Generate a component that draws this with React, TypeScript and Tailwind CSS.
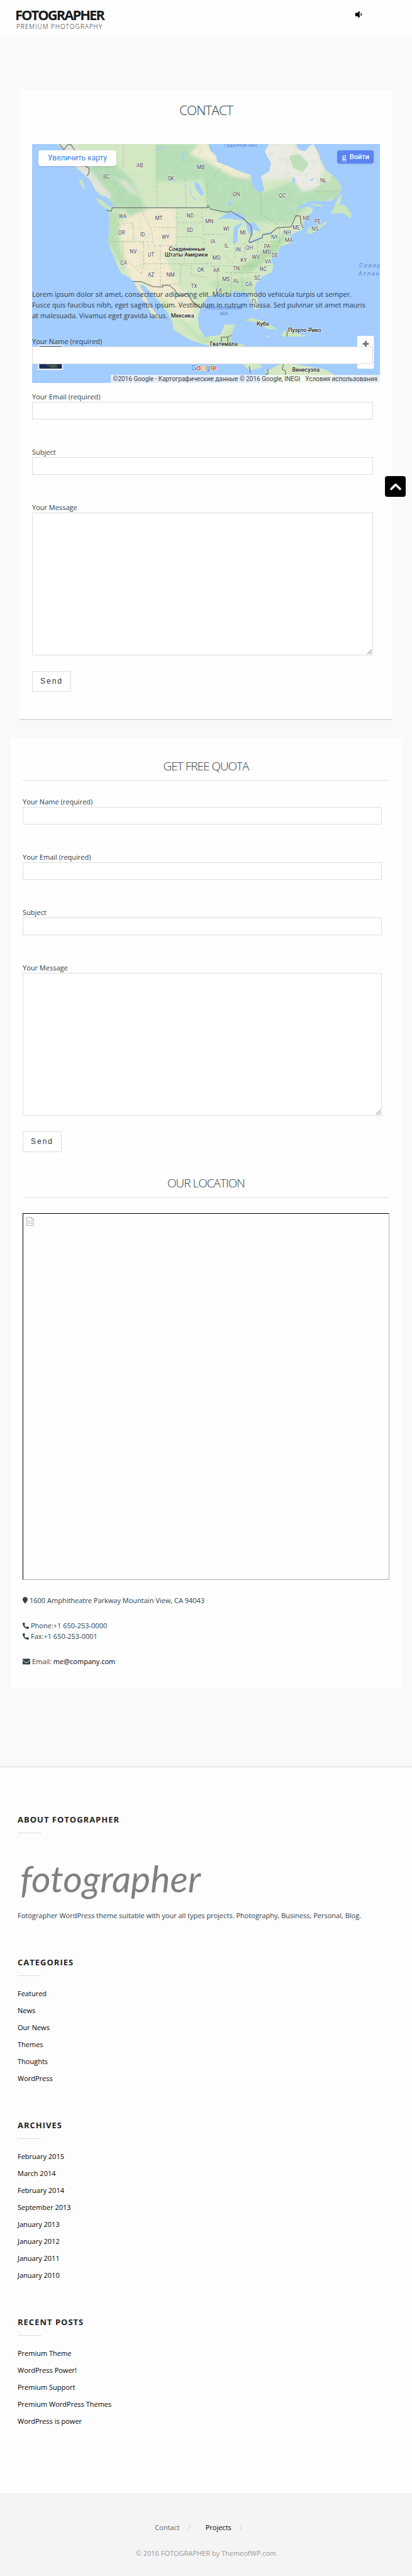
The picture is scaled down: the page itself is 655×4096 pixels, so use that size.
import React from "react";
import { ChevronUp } from "lucide-react";
import { FaEnvelope, FaMapMarker, FaPhone, FaVolumeDown } from "react-icons/fa";

type MapLabel = { x: number; y: number; text: string };

const states: MapLabel[] = [
    { x: 373, y: 175, text: "BC" }, { x: 541, y: 117, text: "AB" }, { x: 697, y: 184, text: "SK" },
    { x: 847, y: 127, text: "MB" }, { x: 1025, y: 261, text: "ON" }, { x: 1256, y: 267, text: "QC" },
    { x: 1462, y: 192, text: "NL" }, { x: 455, y: 372, text: "WA" }, { x: 636, y: 381, text: "MT" },
    { x: 794, y: 369, text: "ND" }, { x: 449, y: 456, text: "OR" }, { x: 554, y: 465, text: "ID" },
    { x: 670, y: 477, text: "WY" }, { x: 792, y: 441, text: "SD" }, { x: 508, y: 549, text: "NV" },
    { x: 597, y: 564, text: "UT" }, { x: 460, y: 606, text: "CA" }, { x: 597, y: 666, text: "AZ" },
    { x: 695, y: 666, text: "NM" }, { x: 847, y: 642, text: "OK" }, { x: 813, y: 723, text: "TX" },
    { x: 890, y: 399, text: "MN" }, { x: 974, y: 435, text: "WI" }, { x: 1058, y: 456, text: "MI" },
    { x: 908, y: 498, text: "IA" }, { x: 976, y: 522, text: "IL" }, { x: 1035, y: 540, text: "IN" },
    { x: 1091, y: 531, text: "OH" }, { x: 1180, y: 525, text: "PA" }, { x: 1217, y: 477, text: "NY" },
    { x: 1178, y: 552, text: "MD" }, { x: 1219, y: 567, text: "DE" }, { x: 1123, y: 579, text: "WV" },
    { x: 1062, y: 594, text: "KY" }, { x: 1184, y: 600, text: "VA" }, { x: 926, y: 582, text: "MO" },
    { x: 1025, y: 636, text: "TN" }, { x: 1160, y: 639, text: "NC" }, { x: 925, y: 645, text: "AR" },
    { x: 1131, y: 681, text: "SC" }, { x: 973, y: 687, text: "MS" }, { x: 1025, y: 699, text: "AL" },
    { x: 1088, y: 714, text: "GA" }, { x: 938, y: 744, text: "LA" }, { x: 1116, y: 798, text: "FL" },
    { x: 1281, y: 456, text: "NH" }, { x: 1289, y: 492, text: "MA" }, { x: 1327, y: 429, text: "ME" },
    { x: 1376, y: 381, text: "NB" }, { x: 1434, y: 399, text: "PE" }, { x: 1420, y: 435, text: "NS" },
];

const countries: MapLabel[] = [
    { x: 777, y: 536, text: "Соединенные" },
    { x: 774, y: 566, text: "Штаты Америки" },
    { x: 755, y: 872, text: "Мексика" },
    { x: 1158, y: 912, text: "Куба" },
    { x: 1368, y: 943, text: "Пуэрто-Рико" },
    { x: 962, y: 1014, text: "Гватемала" },
    { x: 1374, y: 1144, text: "Венесуэла" },
];

const seas: MapLabel[] = [
    { x: 1050, y: 12, text: "Гудзонов зал." },
    { x: 965, y: 829, text: "Мексиканский" },
    { x: 965, y: 859, text: "зал." },
];

const mainland =
    "M125 0L160 32L190 62L205 100L240 135L272 160L296 186L318 232L345 258L372 264L405 300L404 326L384 342L390 392L382 490L394 530L412 568L428 612L450 652L486 668L508 690L524 716L560 708L590 738L640 792L682 850L704 892L708 930L745 955L790 982L840 1000L880 1010L950 1022L1010 1062L1050 1100L1090 1136L1130 1128L1160 1118L1176 1150L1180 1200L1500 1200L1520 1160L1470 1130L1400 1120L1340 1108L1270 1098L1230 1112L1180 1140L1140 1104L1080 1094L1060 1060L1066 1008L1000 1000L998 972L1010 930L1022 908L966 906L945 958L900 964L868 970L838 922L832 872L846 822L852 806L884 768L924 752L985 760L1010 738L1052 742L1080 750L1100 792L1116 832L1138 826L1134 784L1116 730L1122 704L1152 668L1202 644L1210 616L1200 580L1236 540L1244 516L1300 496L1294 462L1330 440L1366 426L1358 402L1372 372L1404 344L1410 326L1390 314L1350 320L1320 340L1336 312L1400 286L1500 286L1540 258L1556 214L1540 190L1512 160L1476 132L1452 90L1440 50L1412 0L1390 12L1372 36L1340 30L1322 0L1190 0L1168 38L1200 98L1190 140L1150 160L1158 206L1166 232L1142 246L1106 210L1100 156L1050 140L980 110L928 90L924 60L892 30L886 0Z";

const NorthAmericaMap = () => (
    <svg viewBox="0 0 1746 1200" className="block w-full" role="img" aria-label="Map" fontFamily="Roboto, sans-serif">
        <defs>
            <clipPath id="land"><path d={mainland} /></clipPath>
            <filter id="soft" x="-10%" y="-10%" width="120%" height="120%"><feGaussianBlur stdDeviation="9" /></filter>
            <filter id="speckle" x="0" y="0" width="100%" height="100%">
                <feTurbulence type="fractalNoise" baseFrequency="0.03" numOctaves="4" seed="4" />
                <feColorMatrix values="0 0 0 0 0.56  0 0 0 0 0.8  0 0 0 0 0.58  0 5 0 0 -2.6" />
            </filter>
        </defs>
        <rect width="1746" height="1200" fill="#a3ccff" />
        <path d={mainland} fill="#d3e8c3" />
        <g clipPath="url(#land)">
            <g filter="url(#soft)">
                {/* forests */}
                <path d="M620 0L880 0L930 70L1100 160L1150 250L1300 190L1560 190L1540 270L1400 300L1290 400L1080 390L880 320L860 180L620 190Z" fill="#b7deb7" />
                <path d="M240 90L420 100L500 180L560 300L600 440L540 440L470 330L380 320L280 180Z" fill="#b4dcb4" />
                <path d="M385 340L440 340L430 490L455 560L490 640L450 620L380 490Z" fill="#b9dfb2" />
                <path d="M1100 640L1240 530L1290 440L1220 480L1130 560L1000 650Z" fill="#b2dba9" />
                <path d="M890 690L1100 670L1110 750L930 750Z" fill="#bfe1b4" />
                <path d="M640 750L690 830L850 1000L1060 1010L1030 900L950 980L830 960Z" fill="#c2e2b4" />
                {/* dry lands */}
                <path d="M440 390L520 350L620 320L720 330L730 500L660 560L740 700L700 800L620 760L560 700L500 690L460 600L450 500Z" fill="#f3ead0" />
                <path d="M700 720L780 740L820 860L780 900L690 830Z" fill="#f1ead0" />
                {/* tundra */}
                <path d="M1170 0L1420 0L1460 130L1440 220L1360 240L1300 170L1150 190Z" fill="#ecebe3" />
                <path d="M840 0L890 0L930 70L1100 150L1090 175L1000 160L880 90L790 50Z" fill="#f1ecd4" />
                <path d="M120 0L220 0L290 130L400 260L380 290L280 200L200 90Z" fill="#e2e4da" />
                <path d="M420 170L480 190L540 270L500 250Z" fill="#e0e3d8" />
            </g>
            <rect width="1746" height="1200" filter="url(#speckle)" opacity="0.35" />
            <path d="M1290 60L1340 50L1390 100L1360 140L1310 120ZM1500 160L1530 150L1560 220L1410 240L1430 215L1500 200Z" fill="#bfe0b9" />
        </g>
        {/* islands */}
        <g fill="#c9e5bd">
            <path d="M512 690L546 694L552 722L580 790L612 838L640 876L626 880L596 850L576 800L550 780L556 760L530 730Z" fill="#e9e8c6" />
            <path d="M315 270L350 282L398 322L390 334L350 312Z" />
            <path d="M232 182L252 180L266 228L254 220Z" />
            <path d="M1552 252L1536 270L1512 326L1494 350L1560 346L1600 376L1604 350L1580 318L1560 300L1544 312L1558 256Z" />
            <path d="M1376 446L1384 424L1410 416L1450 404L1480 386L1478 400L1440 426L1400 452Z" />
            <path d="M1394 300L1450 304L1456 314L1420 312Z" />
            <path d="M1066 886L1100 874L1150 884L1200 910L1234 930L1180 930L1150 900L1100 890Z" />
            <path d="M1260 940L1290 936L1370 962L1330 968L1250 966ZM1170 962L1196 966L1180 970ZM1358 960L1384 962L1362 970Z" />
            <path d="M1168 838L1182 860L1176 862Z" />
        </g>
        {/* lakes */}
        <g fill="#a3ccff">
            <path d="M932 378L985 346L1040 344L1072 372L1060 384L1000 376L960 374Z" />
            <path d="M1008 500L1012 420L1044 400L1060 396L1034 424L1030 494Z" />
            <path d="M1072 392L1120 396L1150 440L1110 430L1098 468L1084 440Z" />
            <path d="M1086 492L1120 478L1160 462L1150 474L1096 500ZM1160 450L1204 440L1196 452L1164 456Z" />
            <path d="M814 186L838 200L862 250L850 262L820 220ZM786 200L796 250L826 284L806 270ZM756 40L766 44L752 96Z" />
            <path d="M984 290L998 286L1002 306L988 310ZM640 20L668 14L624 38ZM720 178L700 186L716 190ZM368 290L400 302L402 318L376 300Z" />
            <path d="M580 500L588 512L584 518ZM1392 180L1416 172L1406 186ZM1310 160L1322 180L1316 200L1306 186Z" />
            <path d="M540 704L560 716L596 764L610 800L570 760L552 730Z" />
        </g>
        {/* state lines */}
        <g fill="none" stroke="#9fae98" strokeWidth="2" strokeDasharray="14 7">
            <path d="M458 0V120M628 0V318M770 180L774 318M880 316V200L980 90M1147 240V350L1240 410M1412 236L1540 240" />
            <path d="M384 490H610M430 404L508 396V490M556 350L600 430L610 510M610 418H728M728 320V510M610 510H728M728 395H858M728 466H850L870 500M850 320L860 450" />
            <path d="M457 490V570L550 650M560 490V601M644 510V718M560 601H876M745 601V704H650M550 650L560 601M745 610H798V655L876 668M764 510V601" />
            <path d="M860 454H970M870 600H900L930 640V740M890 612H1200M970 560L1010 600M1016 494V580M1066 494V560M1132 490V540H1200M1000 645V740M1050 645L1060 740M970 645H1140M1130 490H1230M1240 420V500M1290 430V500" />
        </g>
        {/* borders */}
        <g fill="none" stroke="#6d7470" strokeWidth="4">
            <path d="M136 0L160 28L178 4L194 2L214 30M266 110L286 122L286 146L276 160M374 332L396 338L404 320H880L884 310L896 326L940 336L978 342L998 338L1060 374L1098 410L1104 450L1088 488L1094 496L1156 470L1158 454L1196 450L1230 420L1300 416L1324 360L1346 362L1350 400L1362 424" />
            <path d="M506 690L546 690L608 716L656 718V709H688L716 732L736 764L780 752L812 800L846 824M950 996V970H982L1000 960M982 970L984 1000L1000 996M1280 938V966M1262 1104L1256 1130L1272 1140V1160M1090 1116L1096 1150M1180 1132L1186 1150L1170 1160" />
        </g>
        <g fontSize="26" fill="#3f4444" stroke="#fff" strokeWidth="5" strokeOpacity="0.75" strokeLinejoin="round" paintOrder="stroke" textAnchor="middle">
            {states.map((s) => (
                <text key={s.text} x={s.x} y={s.y}>{s.text}</text>
            ))}
        </g>
        <g fontSize="28" fontWeight="500" fill="#222" stroke="#fff" strokeWidth="5" strokeOpacity="0.75" strokeLinejoin="round" paintOrder="stroke" textAnchor="middle">
            {countries.map((c) => (
                <text key={c.text} x={c.x} y={c.y}>{c.text}</text>
            ))}
        </g>
        <g fontSize="27" fontStyle="italic" fill="#5a8ace" textAnchor="middle">
            {seas.map((s) => (
                <text key={s.text} x={s.x} y={s.y}>{s.text}</text>
            ))}
        </g>
        <g fontSize="30" fontStyle="italic" fill="#5a8ace" letterSpacing="6">
            <text x="1642" y="620">Северная</text>
            <text x="1638" y="659">Атлантика</text>
        </g>
        <text x="1466" y="1178" fontSize="24" fill="#a9a9a9">Гайана</text>
        {/* satellite switch and zoom box */}
        <rect x="30" y="1008" width="126" height="126" rx="6" fill="#fff" />
        <rect x="36" y="1014" width="114" height="114" fill="#1b2c5c" />
        <path d="M60 1100L90 1108L120 1100L128 1120L100 1126Z" fill="#46583f" />
        <rect x="1632" y="963" width="84" height="165" rx="6" fill="#fff" />
        <path d="M1660 1003H1690M1675 988V1018" stroke="#666" strokeWidth="8" />
        <g fontSize="40" fontWeight="500" stroke="#fff" strokeWidth="4" paintOrder="stroke">
            <text x="798" y="1138">
                <tspan fill="#4285f4">G</tspan>
                <tspan fill="#ea4335">o</tspan>
                <tspan fill="#fbbc05">o</tspan>
                <tspan fill="#4285f4">g</tspan>
                <tspan fill="#34a853">l</tspan>
                <tspan fill="#ea4335">e</tspan>
            </text>
        </g>
    </svg>
);

const fields = [
    { name: "name", label: "Your Name (required)", type: "text" },
    { name: "email", label: "Your Email (required)", type: "email" },
    { name: "subject", label: "Subject", type: "text" },
];

const ContactForm = ({ id }: { id: string }) => {
    return (
        <form onSubmit={(e) => e.preventDefault()}>
            {fields.map((field) => (
                <div key={field.name} className="mb-[43px]">
                    <label htmlFor={`${id}-${field.name}`} className="block">{field.label}</label>
                    <input
                        id={`${id}-${field.name}`}
                        type={field.type}
                        className="block h-7 w-[98%] border border-[#ddd] bg-white px-2 outline-none"
                    />
                </div>
            ))}
            <div className="mb-[25px]">
                <label htmlFor={`${id}-message`} className="block">Your Message</label>
                <textarea
                    id={`${id}-message`}
                    className="block h-[227px] w-[98%] resize-y border border-[#ddd] bg-white p-2 outline-none"
                />
            </div>
            <button
                type="submit"
                className="block h-[33px] border border-[#ddd] bg-white px-3 font-['Liberation_Sans',sans-serif] text-[12px] tracking-[2px] text-[#333]"
            >
                Send
            </button>
        </form>
    );
};

const WidgetTitle = ({ children }: { children: React.ReactNode }) => (
    <h3 className="text-[13px] leading-5 font-bold tracking-[1px] text-[#222] uppercase after:mt-[11px] after:block after:h-px after:w-[38px] after:bg-[#ddd]">
        {children}
    </h3>
);

const LinkList = ({ title, items }: { title: string; items: string[] }) => (
    <section className="mt-14">
        <WidgetTitle>{title}</WidgetTitle>
        <ul className="mt-[19px] flex flex-col gap-[10px] text-black">
            {items.map((item) => (
                <li key={item}><a href="#">{item}</a></li>
            ))}
        </ul>
    </section>
);

const SectionTitle = ({ children }: { children: React.ReactNode }) => (
    <h2 className="mb-6 border-b-2 border-[#eee] pb-[9px] text-center text-[19px] leading-[26px] font-light tracking-[-1px]">
        {children}
    </h2>
);

export default function App() {
    return (
        <div className="relative bg-[#f9f9f9] font-['Open_Sans',sans-serif] text-[11px] leading-[17px] text-[#2f4047]">
            <header className="flex h-[57px] items-start justify-between bg-[#fefefe] pr-[78px] pl-6">
                <a href="#" className="mt-3 text-center text-[#1a1a1a]">
                    <span className="block text-[22px] leading-[23px] font-bold tracking-[-2px]">FOTOGRAPHER</span>
                    <span className="block text-[10px] leading-[15px] font-light tracking-[1px]">PREMIUM PHOTOGRAPHY</span>
                </a>
                <button type="button" aria-label="Sound" className="mt-4 text-black">
                    <FaVolumeDown size={14} />
                </button>
            </header>

            <main className="pt-[85px] pb-[124px]">
                <article className="mx-[31px] rounded-t border-b-2 border-[#ddd] bg-[#fefefe] px-5 pt-5 pb-[43px]">
                    <h1 className="mb-[41px] text-center text-[21px] leading-[26px] font-light tracking-[-1px]">CONTACT</h1>
                    {/* the map is taller than its box and runs on under the form */}
                    <div className="relative h-[230px]">
                        <div className="relative overflow-hidden font-[Roboto,sans-serif]">
                            <NorthAmericaMap />
                            <a href="#" className="absolute top-[10px] left-[10px] rounded-sm bg-white px-[15px] py-1 text-[12px] text-[#3a84df] shadow">
                                Увеличить карту
                            </a>
                            <button type="button" className="absolute top-[10px] right-[10px] flex h-[21px] items-center gap-[5px] rounded-sm bg-[#5b84f1] px-[7px] text-[11px] font-medium text-white shadow">
                                <span className="font-['Liberation_Serif',serif] text-[15px]">g</span>
                                Войти
                            </button>
                            <div className="absolute right-0 bottom-0 flex h-[13px] items-center gap-2 bg-white/70 px-1 text-[10px] whitespace-nowrap text-[#444]">
                                <span>©2016 Google - Картографические данные © 2016 Google, INEGI</span>
                                <a href="#">Условия использования</a>
                            </div>
                        </div>
                    </div>
                    <div className="relative">
                        <p className="mb-6 pr-[18px]">
                            Lorem ipsum dolor sit amet, consectetur adipiscing elit. Morbi commodo vehicula turpis ut semper. Fusce quis
                            faucibus nibh, eget sagittis ipsum. Vestibulum in rutrum massa. Sed pulvinar sit amet mauris at malesuada.
                            Vivamus eget gravida lacus.
                        </p>
                        <ContactForm id="contact" />
                    </div>
                </article>

                <aside className="mx-[17px] mt-7 rounded-t bg-[#fefefe] px-[19px] pt-8 pb-[35px]">
                    <SectionTitle>GET FREE QUOTA</SectionTitle>
                    <ContactForm id="quota" />
                    <div className="mt-9">
                        <SectionTitle>OUR LOCATION</SectionTitle>
                    </div>
                    {/* empty picture frame */}
                    <div className="aspect-square w-full border border-t-black border-r-[#b0b0b0] border-b-[#b0b0b0] border-l-black p-[5px]">
                        <svg width="12" height="14" viewBox="0 0 12 14" fill="none" stroke="#b0b0b0">
                            <path d="M.5 7.500V.5H8L11.500 4V7.500M8 .5V4H11.500M.5 7.500L2.500 6L4.500 8L6.500 6L8.500 8L11.500 6M.5 13.500V10L2.500 9L4.500 11L6.500 9L8.500 11L11.500 9.500V13.500Z" />
                        </svg>
                    </div>
                    <address className="mt-6 not-italic">
                        <p className="flex items-center gap-[3px]"><FaMapMarker size={11} className="w-2" />1600 Amphitheatre Parkway Mountain View, CA 94043</p>
                        <p className="mt-[23px] flex items-center gap-[3px]"><FaPhone size={10} className="-scale-x-100" />Phone:+1 650-253-0000</p>
                        <p className="flex items-center gap-[3px]"><FaPhone size={10} className="-scale-x-100" />Fax:+1 650-253-0001</p>
                        <p className="mt-[23px] flex items-center gap-[3px]">
                            <FaEnvelope size={12} />
                            Email: <a href="#" className="text-black">me@company.com</a>
                        </p>
                    </address>
                </aside>
            </main>

            <section className="border-t border-[#ddd] bg-[#fdfdfd] px-7 pt-[73px] pb-[107px]">
                <WidgetTitle>About Fotographer</WidgetTitle>
                <p className="mt-[22px] pl-1 font-[Lato,sans-serif] text-[59px] leading-[100px] text-[#808080] italic">fotographer</p>
                <p>Fotographer WordPress theme suitable with your all types projects. Photography, Business, Personal, Blog.</p>
                <LinkList title="Categories" items={["Featured", "News", "Our News", "Themes", "Thoughts", "WordPress"]} />
                <LinkList
                    title="Archives"
                    items={["February 2015", "March 2014", "February 2014", "September 2013", "January 2013", "January 2012", "January 2011", "January 2010"]}
                />
                <LinkList
                    title="Recent Posts"
                    items={["Premium Theme", "WordPress Power!", "Premium Support", "Premium WordPress Themes", "WordPress is power"]}
                />
            </section>

            <footer className="border-t border-[#e8e8e8] bg-[#f4f4f4] pt-11 pb-7 text-center">
                <nav className="flex justify-center">
                    <a href="#" className="text-[#666]">Contact</a>
                    <span className="mr-6 ml-[13px] text-[#ccc]">/</span>
                    <a href="#" className="text-black">Projects</a>
                    <span className="mr-6 ml-[13px] text-[#ccc]">/</span>
                </nav>
                <p className="mt-6 text-[#999]">© 2016 FOTOGRAPHER by ThemeofWP.com</p>
            </footer>

            <button
                type="button"
                aria-label="Back to top"
                className="absolute top-[757px] right-[10px] flex size-[33px] items-center justify-center rounded-sm bg-black text-white"
            >
                <ChevronUp size={28} strokeWidth={3} />
            </button>
        </div>
    );
}
